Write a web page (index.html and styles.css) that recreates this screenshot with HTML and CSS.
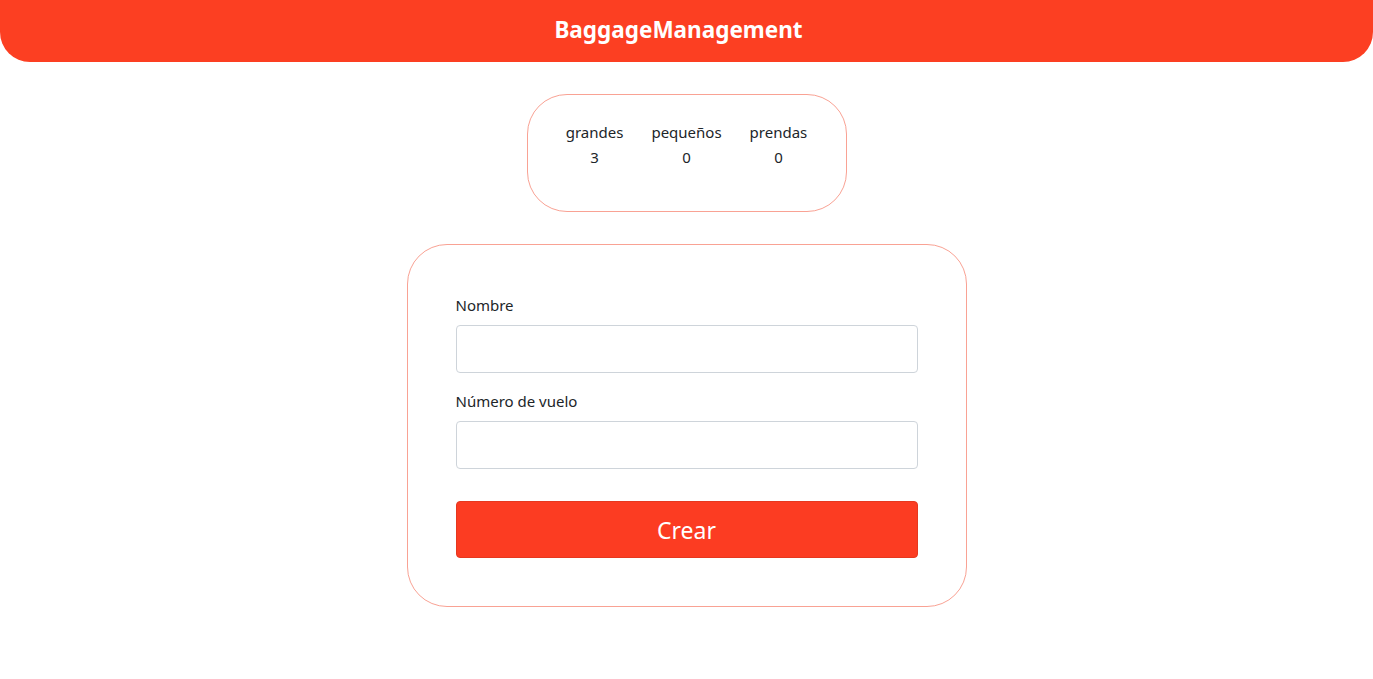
FILE: index.html
```html
<!DOCTYPE html>
<html lang="es">
<head>
<meta charset="utf-8">
<title>BaggageManagement</title>
<link rel="stylesheet" href="styles.css">
</head>
<body>
<header class="topbar">
  <h1 class="brand">BaggageManagement</h1>
</header>
<main class="content">
  <section class="stats">
    <div class="stat"><span>grandes</span><span>3</span></div>
    <div class="stat"><span>pequeños</span><span>0</span></div>
    <div class="stat"><span>prendas</span><span>0</span></div>
  </section>
  <form class="card">
    <label class="label" for="nombre">Nombre</label>
    <input class="input" id="nombre" type="text">
    <label class="label" for="vuelo">Número de vuelo</label>
    <input class="input" id="vuelo" type="text">
    <button class="btn" type="button">Crear</button>
  </form>
</main>
</body>
</html>
```
FILE: styles.css
```css
* { box-sizing: border-box; }
html, body { margin: 0; padding: 0; }
body {
  font-family: "Noto Sans", "Open Sans", sans-serif;
  font-size: 15px;
  color: #212529;
  background: #fff;
}
.topbar {
  height: 62px;
  background: #fc3f22;
  border-radius: 0 0 30px 30px;
  display: flex;
  align-items: center;
  justify-content: center;
  padding-right: 16px;
  padding-bottom: 3px;
}
.brand {
  margin: 0;
  color: #fff;
  font-size: 22.5px;
  font-weight: 700;
  letter-spacing: 0;
}
.content {
  display: flex;
  flex-direction: column;
  align-items: center;
  padding-top: 32px;
}
.stats {
  width: 320px;
  height: 118px;
  border: 1px solid #f9a294;
  border-radius: 40px;
  display: flex;
  justify-content: center;
  gap: 28px;
  padding-top: 25px;
}
.stat {
  display: flex;
  flex-direction: column;
  align-items: center;
  line-height: 25px;
}
.card {
  margin-top: 32px;
  width: 560px;
  border: 1px solid #f9a294;
  border-radius: 40px;
  padding: 48px 48px 48px;
  display: flex;
  flex-direction: column;
}
.label {
  line-height: 24px;
  margin-bottom: 8px;
}
.input {
  height: 48px;
  border: 1px solid #ced4da;
  border-radius: 4px;
  margin-bottom: 16px;
  font: inherit;
}
.btn {
  margin-top: 16px;
  height: 57px;
  background: #fc3c22;
  border: 1px solid #e5381f;
  border-radius: 4px;
  color: #fff;
  font-family: inherit;
  font-size: 23px;
}
```
